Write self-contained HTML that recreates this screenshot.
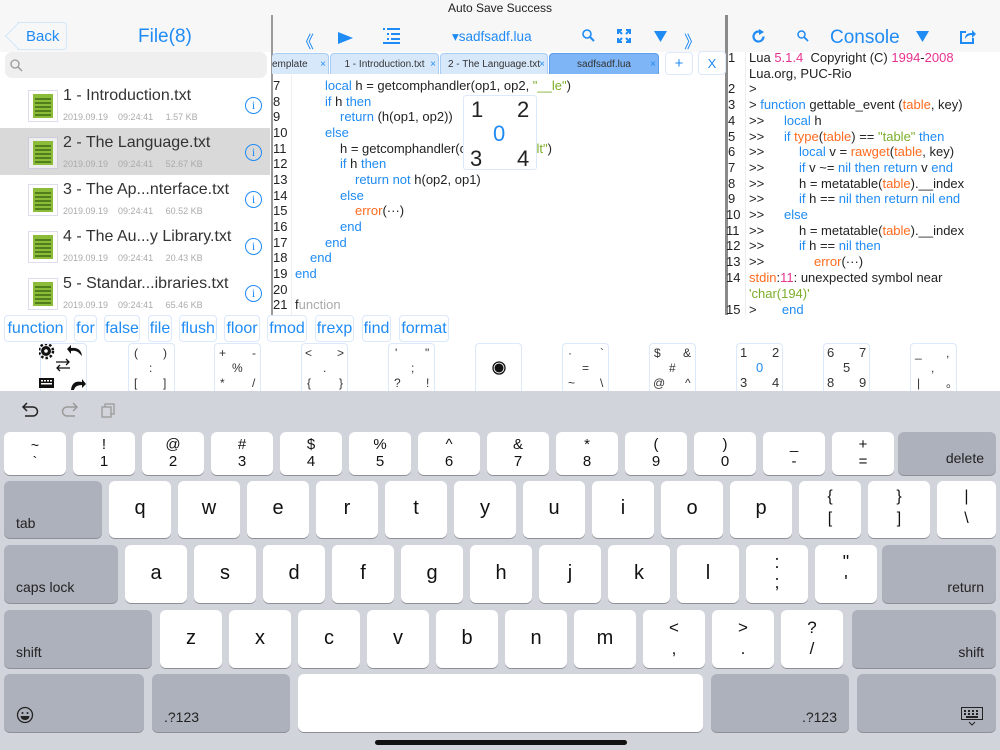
<!DOCTYPE html>
<html><head><meta charset="utf-8"><style>
*{margin:0;padding:0;box-sizing:border-box}
body{width:1000px;height:750px;overflow:hidden;background:#fff;font-family:"Liberation Sans",sans-serif;position:relative;color:#222}
.a{position:absolute}
.blue{color:#1f8bf5}
.k{color:#1f8bf5}.o{color:#ff6b1f}.m{color:#e8328f}.g{color:#7cae2a}.gr{color:#aaa}
.cl{position:absolute;font-size:13px;white-space:pre;line-height:16px;height:16px}
.fr{position:absolute;left:0;width:270px;height:47px}
.ft{position:absolute;left:63px;top:6px;font-size:16px;color:#333}
.fd{position:absolute;left:63px;top:31px;font-size:9px;color:#aaa;white-space:pre}
.fi{position:absolute;left:28px;top:9px}
.info{position:absolute;left:245px;top:16px;width:17px;height:17px;border:1.3px solid #1f8bf5;border-radius:50%;color:#1f8bf5;font-size:12px;text-align:center;line-height:15px;font-family:"Liberation Serif",serif}
.tab{position:absolute;top:53px;height:21px;background:#d7e8fb;border:1px solid #a9cdf5;border-bottom:none;border-radius:4px 4px 0 0;font-size:10px;color:#333;line-height:21px;text-align:center}
.tab i{position:absolute;right:2px;top:0;font-style:normal;color:#1f8bf5;font-size:10px}
.kw{position:absolute;top:315px;height:27px;border:1px solid #dbe9fb;border-radius:4px;color:#1f8bf5;font-size:16px;line-height:26px;text-align:center}
.sk{position:absolute;top:343px;width:47px;height:48px;border:1px solid #dbe9fb;border-bottom:none;border-radius:4px 4px 0 0;font-size:12px;color:#333}
.sk span{position:absolute;line-height:12px}
.key{position:absolute;background:#fff;border-radius:6px;box-shadow:0 1px 0 #8d9096;text-align:center;color:#111}
.dk{background:#adb1bb;color:#222;text-align:left}
.l1{font-size:20px}
</style></head><body>
<div class="a" style="left:0;top:0;width:1000px;height:52px;background:#f7f7f7"></div>
<div class="a" style="left:0;top:0;width:1000px;text-align:center;font-size:12px;top:1px;color:#222">Auto Save Success</div>
<div class="a" style="left:17px;top:22px;width:50px;height:28px;border:1px solid #d5e6fa;border-left:none;border-radius:0 4px 4px 0"></div>
<div class="a" style="left:9px;top:26px;width:20px;height:20px;border-left:1px solid #d5e6fa;border-bottom:1px solid #d5e6fa;transform:rotate(45deg)"></div>
<div class="a blue" style="left:26px;top:28px;font-size:15px">Back</div>
<div class="a blue" style="left:138px;top:26px;font-size:19px">File(8)</div>
<div class="a" style="left:5px;top:52px;width:262px;height:26px;background:#efeff0;border-radius:7px"></div>
<svg class="a" style="left:10px;top:59px" width="13" height="13"><circle cx="5" cy="5" r="4" fill="none" stroke="#999" stroke-width="1.3"/><line x1="8" y1="8" x2="12" y2="12" stroke="#999" stroke-width="1.4"/></svg>
<div class="fr" style="top:81px"><svg class="fi" width="30" height="32"><rect x="0.5" y="0.5" width="29" height="31" fill="#fff" stroke="#dde"/><rect x="5" y="4" width="20" height="24" fill="#8dbb3a"/><g stroke="#3d6b12" stroke-width="1.5"><line x1="7" y1="9" x2="23" y2="9"/><line x1="7" y1="13" x2="23" y2="13"/><line x1="7" y1="17" x2="23" y2="17"/><line x1="7" y1="21" x2="23" y2="21"/><line x1="7" y1="25" x2="23" y2="25"/></g></svg><div class="ft">1 - Introduction.txt</div><div class="fd">2019.09.19    09:24:41     1.57 KB</div><div class="info">i</div></div>
<div class="fr" style="top:128px;background:#d9d9d9"><svg class="fi" width="30" height="32"><rect x="0.5" y="0.5" width="29" height="31" fill="#eee" stroke="#ccd"/><rect x="5" y="4" width="20" height="24" fill="#8dbb3a"/><g stroke="#3d6b12" stroke-width="1.5"><line x1="7" y1="9" x2="23" y2="9"/><line x1="7" y1="13" x2="23" y2="13"/><line x1="7" y1="17" x2="23" y2="17"/><line x1="7" y1="21" x2="23" y2="21"/><line x1="7" y1="25" x2="23" y2="25"/></g></svg><div class="ft">2 - The Language.txt</div><div class="fd">2019.09.19    09:24:41     52.67 KB</div><div class="info">i</div></div>
<div class="fr" style="top:175px"><svg class="fi" width="30" height="32"><rect x="0.5" y="0.5" width="29" height="31" fill="#fff" stroke="#dde"/><rect x="5" y="4" width="20" height="24" fill="#8dbb3a"/><g stroke="#3d6b12" stroke-width="1.5"><line x1="7" y1="9" x2="23" y2="9"/><line x1="7" y1="13" x2="23" y2="13"/><line x1="7" y1="17" x2="23" y2="17"/><line x1="7" y1="21" x2="23" y2="21"/><line x1="7" y1="25" x2="23" y2="25"/></g></svg><div class="ft">3 - The Ap...nterface.txt</div><div class="fd">2019.09.19    09:24:41     60.52 KB</div><div class="info">i</div></div>
<div class="fr" style="top:222px"><svg class="fi" width="30" height="32"><rect x="0.5" y="0.5" width="29" height="31" fill="#fff" stroke="#dde"/><rect x="5" y="4" width="20" height="24" fill="#8dbb3a"/><g stroke="#3d6b12" stroke-width="1.5"><line x1="7" y1="9" x2="23" y2="9"/><line x1="7" y1="13" x2="23" y2="13"/><line x1="7" y1="17" x2="23" y2="17"/><line x1="7" y1="21" x2="23" y2="21"/><line x1="7" y1="25" x2="23" y2="25"/></g></svg><div class="ft">4 - The Au...y Library.txt</div><div class="fd">2019.09.19    09:24:41     20.43 KB</div><div class="info">i</div></div>
<div class="fr" style="top:269px"><svg class="fi" width="30" height="32"><rect x="0.5" y="0.5" width="29" height="31" fill="#fff" stroke="#dde"/><rect x="5" y="4" width="20" height="24" fill="#8dbb3a"/><g stroke="#3d6b12" stroke-width="1.5"><line x1="7" y1="9" x2="23" y2="9"/><line x1="7" y1="13" x2="23" y2="13"/><line x1="7" y1="17" x2="23" y2="17"/><line x1="7" y1="21" x2="23" y2="21"/><line x1="7" y1="25" x2="23" y2="25"/></g></svg><div class="ft">5 - Standar...ibraries.txt</div><div class="fd">2019.09.19    09:24:41     65.46 KB</div><div class="info">i</div></div>
<div class="a" style="left:271px;top:15px;width:2px;height:300px;background:#9a9a9a"></div>
<div class="a" style="left:725px;top:15px;width:3px;height:300px;background:#8a8a8a"></div>
<div class="a blue" style="left:297px;top:28px;font-size:17px">《</div>
<svg class="a" style="left:338px;top:32px" width="15" height="12"><path d="M0 0L15 6L0 12Z" fill="#1f8bf5"/></svg>
<svg class="a" style="left:383px;top:28px" width="17" height="16"><g fill="#1f8bf5"><rect x="0" y="0" width="2" height="2"/><rect x="4" y="0" width="13" height="2"/><rect x="4" y="5" width="2" height="2"/><rect x="8" y="5" width="9" height="2"/><rect x="4" y="10" width="2" height="2"/><rect x="8" y="10" width="9" height="2"/><rect x="0" y="14" width="17" height="2"/></g></svg>
<div class="a blue" style="left:452px;top:29px;font-size:13.5px">▾sadfsadf.lua</div>
<svg class="a" style="left:582px;top:29px" width="13" height="13"><circle cx="5" cy="5" r="4" fill="none" stroke="#1f8bf5" stroke-width="1.6"/><line x1="8" y1="8" x2="12" y2="12" stroke="#1f8bf5" stroke-width="2"/></svg>
<svg class="a" style="left:617px;top:29px" width="14" height="14"><g stroke="#1f8bf5" stroke-width="2" fill="none"><path d="M1 5V1H5M9 1H13V5M13 9V13H9M5 13H1V9"/><path d="M2 2L5 5M12 2L9 5M12 12L9 9M2 12L5 9"/></g></svg>
<svg class="a" style="left:654px;top:31px" width="13" height="11"><path d="M0 0H13L6.5 11Z" fill="#1f8bf5"/></svg>
<div class="a blue" style="left:684px;top:28px;font-size:17px">》</div>
<div class="tab" style="left:272px;width:57px;border-left:none;text-align:left;padding-left:0">emplate<i>×</i></div>
<div class="tab" style="left:330px;width:109px">1 - Introduction.txt<i>×</i></div>
<div class="tab" style="left:440px;width:108px">2 - The Language.txt<i>×</i></div>
<div class="tab" style="left:549px;width:110px;background:#7db5f6;border-color:#5c9eea">sadfsadf.lua<i>×</i></div>
<div class="a blue" style="left:665px;top:52px;width:28px;height:23px;border:1px solid #dbe9fb;border-radius:4px;text-align:center;font-size:15px;line-height:22px">+</div>
<div class="a blue" style="left:698px;top:51px;width:28px;height:24px;border:1px solid #dbe9fb;border-radius:4px;text-align:center;font-size:13px;line-height:23px">X</div>
<div class="a" style="left:291px;top:75px;width:1px;height:240px;background:#eee"></div>
<div class="cl" style="left:273px;top:78px">7</div><div class="cl" style="left:325px;top:78px"><span class="k">local</span> h = getcomphandler(op1, op2, <span class="g">"__le"</span>)</div>
<div class="cl" style="left:273px;top:94px">8</div><div class="cl" style="left:325px;top:94px"><span class="k">if</span> h <span class="k">then</span></div>
<div class="cl" style="left:273px;top:109px">9</div><div class="cl" style="left:340px;top:109px"><span class="k">return</span> (h(op1, op2))</div>
<div class="cl" style="left:273px;top:125px">10</div><div class="cl" style="left:325px;top:125px"><span class="k">else</span></div>
<div class="cl" style="left:273px;top:141px">11</div><div class="cl" style="left:340px;top:141px">h = getcomphandler(op1, op2, <span class="g">"__lt"</span>)</div>
<div class="cl" style="left:273px;top:156px">12</div><div class="cl" style="left:340px;top:156px"><span class="k">if</span> h <span class="k">then</span></div>
<div class="cl" style="left:273px;top:172px">13</div><div class="cl" style="left:355px;top:172px"><span class="k">return not</span> h(op2, op1)</div>
<div class="cl" style="left:273px;top:188px">14</div><div class="cl" style="left:340px;top:188px"><span class="k">else</span></div>
<div class="cl" style="left:273px;top:203px">15</div><div class="cl" style="left:355px;top:203px"><span class="o">error</span>(···)</div>
<div class="cl" style="left:273px;top:219px">16</div><div class="cl" style="left:340px;top:219px"><span class="k">end</span></div>
<div class="cl" style="left:273px;top:235px">17</div><div class="cl" style="left:325px;top:235px"><span class="k">end</span></div>
<div class="cl" style="left:273px;top:250px">18</div><div class="cl" style="left:310px;top:250px"><span class="k">end</span></div>
<div class="cl" style="left:273px;top:266px">19</div><div class="cl" style="left:295px;top:266px"><span class="k">end</span></div>
<div class="cl" style="left:273px;top:282px">20</div>
<div class="cl" style="left:273px;top:297px">21</div><div class="cl" style="left:295px;top:297px">f<span class="gr">unction</span></div>
<div class="a" style="left:463px;top:95px;width:74px;height:75px;background:#fff;border:1px solid #dbe9fb;border-radius:3px;font-size:22px">
<span class="a" style="left:7px;top:1px">1</span><span class="a" style="left:53px;top:1px">2</span><span class="a blue" style="left:29px;top:25px">0</span><span class="a" style="left:6px;top:50px">3</span><span class="a" style="left:53px;top:50px">4</span></div>
<svg class="a" style="left:751px;top:29px" width="15" height="15"><path d="M12.5 7.5A5 5 0 1 1 10 3.2" fill="none" stroke="#1f8bf5" stroke-width="2.2"/><path d="M8 0L13 3L8 6Z" fill="#1f8bf5"/></svg>
<svg class="a" style="left:797px;top:30px" width="12" height="12"><circle cx="4.5" cy="4.5" r="3.5" fill="none" stroke="#1f8bf5" stroke-width="1.5"/><line x1="7" y1="7" x2="11" y2="11" stroke="#1f8bf5" stroke-width="1.8"/></svg>
<div class="a blue" style="left:830px;top:27px;font-size:19px">Console</div>
<svg class="a" style="left:916px;top:31px" width="13" height="11"><path d="M0 0H13L6.5 11Z" fill="#1f8bf5"/></svg>
<svg class="a" style="left:959px;top:28px" width="17" height="16"><path d="M7 4H2V15H14V10" fill="none" stroke="#1f8bf5" stroke-width="2"/><path d="M6 11C6 6 9 5 13 5V2L17 6L13 10V7C10 7 8 8 6 11Z" fill="#1f8bf5"/></svg>
<div class="a" style="left:745px;top:52px;width:1px;height:263px;background:#eee"></div>
<div class="cl" style="left:728px;top:50px">1</div><div class="cl" style="left:749px;top:50px">Lua <span class="m">5.1.4</span>  Copyright (C) <span class="m">1994</span>-<span class="m">2008</span></div>
<div class="cl" style="left:749px;top:66px">Lua.org, PUC-Rio</div>
<div class="cl" style="left:728px;top:81px">2</div><div class="cl" style="left:749px;top:81px">&gt;</div>
<div class="cl" style="left:728px;top:97px">3</div><div class="cl" style="left:749px;top:97px">&gt; <span class="k">function</span> gettable_event (<span class="o">table</span>, key)</div>
<div class="cl" style="left:728px;top:113px">4</div><div class="cl" style="left:749px;top:113px">&gt;&gt;</div><div class="cl" style="left:784px;top:113px"><span class="k">local</span> h</div>
<div class="cl" style="left:728px;top:129px">5</div><div class="cl" style="left:749px;top:129px">&gt;&gt;</div><div class="cl" style="left:784px;top:129px"><span class="k">if</span> <span class="o">type</span>(<span class="o">table</span>) == <span class="g">"table"</span> <span class="k">then</span></div>
<div class="cl" style="left:728px;top:144px">6</div><div class="cl" style="left:749px;top:144px">&gt;&gt;</div><div class="cl" style="left:799px;top:144px"><span class="k">local</span> v = <span class="o">rawget</span>(<span class="o">table</span>, key)</div>
<div class="cl" style="left:728px;top:160px">7</div><div class="cl" style="left:749px;top:160px">&gt;&gt;</div><div class="cl" style="left:799px;top:160px"><span class="k">if</span> v ~= <span class="k">nil then return</span> v <span class="k">end</span></div>
<div class="cl" style="left:728px;top:176px">8</div><div class="cl" style="left:749px;top:176px">&gt;&gt;</div><div class="cl" style="left:799px;top:176px">h = metatable(<span class="o">table</span>).__index</div>
<div class="cl" style="left:728px;top:191px">9</div><div class="cl" style="left:749px;top:191px">&gt;&gt;</div><div class="cl" style="left:799px;top:191px"><span class="k">if</span> h == <span class="k">nil then return nil end</span></div>
<div class="cl" style="left:726px;top:207px">10</div><div class="cl" style="left:749px;top:207px">&gt;&gt;</div><div class="cl" style="left:784px;top:207px"><span class="k">else</span></div>
<div class="cl" style="left:726px;top:223px">11</div><div class="cl" style="left:749px;top:223px">&gt;&gt;</div><div class="cl" style="left:799px;top:223px">h = metatable(<span class="o">table</span>).__index</div>
<div class="cl" style="left:726px;top:238px">12</div><div class="cl" style="left:749px;top:238px">&gt;&gt;</div><div class="cl" style="left:799px;top:238px"><span class="k">if</span> h == <span class="k">nil then</span></div>
<div class="cl" style="left:726px;top:254px">13</div><div class="cl" style="left:749px;top:254px">&gt;&gt;</div><div class="cl" style="left:814px;top:254px"><span class="o">error</span>(···)</div>
<div class="cl" style="left:726px;top:270px">14</div><div class="cl" style="left:749px;top:270px"><span class="o">stdin</span>:<span class="m">11</span>: unexpected symbol near</div>
<div class="cl" style="left:749px;top:286px"><span class="g">'char(194)'</span></div>
<div class="cl" style="left:726px;top:302px;height:13px;overflow:hidden">15</div><div class="cl" style="left:749px;top:302px;height:13px;overflow:hidden">&gt;       <span class="k">end</span></div>
<div class="kw" style="left:4px;width:63px">function</div>
<div class="kw" style="left:74px;width:23px">for</div>
<div class="kw" style="left:104px;width:36px">false</div>
<div class="kw" style="left:148px;width:24px">file</div>
<div class="kw" style="left:179px;width:38px">flush</div>
<div class="kw" style="left:224px;width:36px">floor</div>
<div class="kw" style="left:267px;width:40px">fmod</div>
<div class="kw" style="left:315px;width:39px">frexp</div>
<div class="kw" style="left:362px;width:29px">find</div>
<div class="kw" style="left:399px;width:50px">format</div>
<div class="sk" style="left:40px"><svg class="a" style="left:-2px;top:0" width="48" height="47"><circle cx="7" cy="7" r="5" fill="#111"/><circle cx="7" cy="7" r="7" fill="none" stroke="#111" stroke-width="2.5" stroke-dasharray="2.5 2"/><circle cx="7" cy="7" r="1.8" fill="#fff"/><path d="M32 4Q42 3 43 12L40 9Q37 6 32 7L32 10L28 5L32 1Z" fill="#111"/><path d="M17 18H30M27 15L30 18L27 21M31 24H18M21 21L18 24L21 27" stroke="#111" stroke-width="1.3" fill="none"/><rect x="0" y="34" width="15" height="10" fill="#111"/><g fill="#fff"><rect x="2" y="36" width="2" height="1.5"/><rect x="5" y="36" width="2" height="1.5"/><rect x="8" y="36" width="2" height="1.5"/><rect x="11" y="36" width="2" height="1.5"/><rect x="2" y="39" width="11" height="1.5"/></g><path d="M32 46Q33 36 43 38L43 35L47 40L43 44L43 41Q36 41 35 46Z" fill="#111"/></svg></div>
<div class="sk" style="left:128px"><span style="left:5px;top:3px">(</span><span style="left:34px;top:3px">)</span><span style="left:20px;top:18px">:</span><span style="left:5px;top:33px">[</span><span style="left:34px;top:33px">]</span></div>
<div class="sk" style="left:214px"><span style="left:4px;top:3px">+</span><span style="left:37px;top:3px">-</span><span style="left:17px;top:18px">%</span><span style="left:5px;top:33px">*</span><span style="left:37px;top:33px">/</span></div>
<div class="sk" style="left:301px"><span style="left:3px;top:3px">&lt;</span><span style="left:35px;top:3px">&gt;</span><span style="left:21px;top:18px">.</span><span style="left:5px;top:33px">{</span><span style="left:37px;top:33px">}</span></div>
<div class="sk" style="left:388px"><span style="left:6px;top:3px">'</span><span style="left:36px;top:3px">"</span><span style="left:22px;top:18px">;</span><span style="left:5px;top:33px">?</span><span style="left:37px;top:33px">!</span></div>
<div class="sk" style="left:475px"><svg class="a" style="left:16px;top:17px" width="14" height="14"><circle cx="7" cy="7" r="6" fill="none" stroke="#111" stroke-width="1.3"/><circle cx="7" cy="7" r="4.5" fill="#111"/></svg></div>
<div class="sk" style="left:562px"><span style="left:5px;top:3px">·</span><span style="left:37px;top:3px">`</span><span style="left:19px;top:18px">=</span><span style="left:5px;top:33px">~</span><span style="left:37px;top:33px">\</span></div>
<div class="sk" style="left:649px"><span style="left:4px;top:3px">$</span><span style="left:33px;top:3px">&amp;</span><span style="left:19px;top:18px">#</span><span style="left:3px;top:33px">@</span><span style="left:35px;top:33px">^</span></div>
<div class="sk" style="left:736px;font-size:13px"><span style="left:3px;top:3px">1</span><span style="left:35px;top:3px">2</span><span class="blue" style="left:19px;top:18px">0</span><span style="left:3px;top:33px">3</span><span style="left:35px;top:33px">4</span></div>
<div class="sk" style="left:823px;font-size:13px"><span style="left:3px;top:3px">6</span><span style="left:35px;top:3px">7</span><span style="left:19px;top:18px">5</span><span style="left:3px;top:33px">8</span><span style="left:35px;top:33px">9</span></div>
<div class="sk" style="left:910px"><span style="left:4px;top:3px">_</span><span style="left:35px;top:3px">,</span><span style="left:20px;top:18px">,</span><span style="left:6px;top:33px">|</span><span style="left:35px;top:33px">。</span></div>
<div class="a" style="left:0;top:391px;width:1000px;height:359px;background:#d1d4da"></div>
<svg class="a" style="left:20px;top:402px" width="100" height="16"><path d="M4 5H13A4.5 4.5 0 0 1 13 14H5" fill="none" stroke="#222" stroke-width="1.5"/><path d="M7 1L3 5L7 9" fill="none" stroke="#222" stroke-width="1.5"/><path d="M56 5H47A4.5 4.5 0 0 0 47 14H55" fill="none" stroke="#999" stroke-width="1.5"/><path d="M53 1L57 5L53 9" fill="none" stroke="#999" stroke-width="1.5"/><rect x="82" y="5" width="9" height="10" fill="none" stroke="#999" stroke-width="1.3"/><path d="M85 5V2H94V12H91" fill="none" stroke="#999" stroke-width="1.3"/></svg>
<div class="key" style="left:4px;top:432px;width:62px;height:43px;font-size:14px;line-height:16px;padding-top:5px">~<br>`</div>
<div class="key" style="left:73px;top:432px;width:62px;height:43px;font-size:15px;line-height:17px;padding-top:4px">!<br>1</div>
<div class="key" style="left:142px;top:432px;width:62px;height:43px;font-size:15px;line-height:17px;padding-top:4px">@<br>2</div>
<div class="key" style="left:211px;top:432px;width:62px;height:43px;font-size:15px;line-height:17px;padding-top:4px">#<br>3</div>
<div class="key" style="left:280px;top:432px;width:62px;height:43px;font-size:15px;line-height:17px;padding-top:4px">$<br>4</div>
<div class="key" style="left:349px;top:432px;width:62px;height:43px;font-size:15px;line-height:17px;padding-top:4px">%<br>5</div>
<div class="key" style="left:418px;top:432px;width:62px;height:43px;font-size:15px;line-height:17px;padding-top:4px">^<br>6</div>
<div class="key" style="left:487px;top:432px;width:62px;height:43px;font-size:15px;line-height:17px;padding-top:4px">&amp;<br>7</div>
<div class="key" style="left:556px;top:432px;width:62px;height:43px;font-size:15px;line-height:17px;padding-top:4px">*<br>8</div>
<div class="key" style="left:625px;top:432px;width:62px;height:43px;font-size:15px;line-height:17px;padding-top:4px">(<br>9</div>
<div class="key" style="left:694px;top:432px;width:62px;height:43px;font-size:15px;line-height:17px;padding-top:4px">)<br>0</div>
<div class="key" style="left:763px;top:432px;width:62px;height:43px;font-size:15px;line-height:17px;padding-top:4px">_<br>-</div>
<div class="key" style="left:832px;top:432px;width:62px;height:43px;font-size:15px;line-height:17px;padding-top:4px">+<br>=</div>
<div class="key dk" style="left:898px;top:432px;width:98px;height:43px;font-size:14px;text-align:right;padding:18px 12px 0 0">delete</div>
<div class="key dk" style="left:4px;top:481px;width:98px;height:57px;font-size:14px;padding:34px 0 0 12px">tab</div>
<div class="key l1" style="left:109px;top:481px;width:62px;height:57px;line-height:54px">q</div>
<div class="key l1" style="left:178px;top:481px;width:62px;height:57px;line-height:54px">w</div>
<div class="key l1" style="left:247px;top:481px;width:62px;height:57px;line-height:54px">e</div>
<div class="key l1" style="left:316px;top:481px;width:62px;height:57px;line-height:54px">r</div>
<div class="key l1" style="left:385px;top:481px;width:62px;height:57px;line-height:54px">t</div>
<div class="key l1" style="left:454px;top:481px;width:62px;height:57px;line-height:54px">y</div>
<div class="key l1" style="left:523px;top:481px;width:62px;height:57px;line-height:54px">u</div>
<div class="key l1" style="left:592px;top:481px;width:62px;height:57px;line-height:54px">i</div>
<div class="key l1" style="left:661px;top:481px;width:62px;height:57px;line-height:54px">o</div>
<div class="key l1" style="left:730px;top:481px;width:62px;height:57px;line-height:54px">p</div>
<div class="key" style="left:799px;top:481px;width:62px;height:57px;font-size:16px;line-height:22px;padding-top:5px">{<br>[</div>
<div class="key" style="left:868px;top:481px;width:62px;height:57px;font-size:16px;line-height:22px;padding-top:5px">}<br>]</div>
<div class="key" style="left:937px;top:481px;width:59px;height:57px;font-size:16px;line-height:22px;padding-top:5px">|<br>\</div>
<div class="key dk" style="left:4px;top:545px;width:114px;height:58px;font-size:14px;padding:34px 0 0 12px">caps lock</div>
<div class="key l1" style="left:125px;top:545px;width:62px;height:58px;line-height:56px">a</div>
<div class="key l1" style="left:194px;top:545px;width:62px;height:58px;line-height:56px">s</div>
<div class="key l1" style="left:263px;top:545px;width:62px;height:58px;line-height:56px">d</div>
<div class="key l1" style="left:332px;top:545px;width:62px;height:58px;line-height:56px">f</div>
<div class="key l1" style="left:401px;top:545px;width:62px;height:58px;line-height:56px">g</div>
<div class="key l1" style="left:470px;top:545px;width:62px;height:58px;line-height:56px">h</div>
<div class="key l1" style="left:539px;top:545px;width:62px;height:58px;line-height:56px">j</div>
<div class="key l1" style="left:608px;top:545px;width:62px;height:58px;line-height:56px">k</div>
<div class="key l1" style="left:677px;top:545px;width:62px;height:58px;line-height:56px">l</div>
<div class="key" style="left:746px;top:545px;width:62px;height:58px;font-size:18px;line-height:20px;padding-top:7px">:<br>;</div>
<div class="key" style="left:815px;top:545px;width:62px;height:58px;font-size:18px;line-height:20px;padding-top:7px">"<br>'</div>
<div class="key dk" style="left:882px;top:545px;width:114px;height:58px;font-size:14px;text-align:right;padding:34px 12px 0 0">return</div>
<div class="key dk" style="left:4px;top:610px;width:148px;height:58px;font-size:14px;padding:34px 0 0 12px">shift</div>
<div class="key l1" style="left:160px;top:610px;width:62px;height:58px;line-height:56px">z</div>
<div class="key l1" style="left:229px;top:610px;width:62px;height:58px;line-height:56px">x</div>
<div class="key l1" style="left:298px;top:610px;width:62px;height:58px;line-height:56px">c</div>
<div class="key l1" style="left:367px;top:610px;width:62px;height:58px;line-height:56px">v</div>
<div class="key l1" style="left:436px;top:610px;width:62px;height:58px;line-height:56px">b</div>
<div class="key l1" style="left:505px;top:610px;width:62px;height:58px;line-height:56px">n</div>
<div class="key l1" style="left:574px;top:610px;width:62px;height:58px;line-height:56px">m</div>
<div class="key" style="left:643px;top:610px;width:62px;height:58px;font-size:17px;line-height:21px;padding-top:7px">&lt;<br>,</div>
<div class="key" style="left:712px;top:610px;width:62px;height:58px;font-size:17px;line-height:21px;padding-top:7px">&gt;<br>.</div>
<div class="key" style="left:781px;top:610px;width:62px;height:58px;font-size:17px;line-height:21px;padding-top:7px">?<br>/</div>
<div class="key dk" style="left:852px;top:610px;width:144px;height:58px;font-size:14px;text-align:right;padding:34px 12px 0 0">shift</div>
<div class="key dk" style="left:4px;top:674px;width:140px;height:58px"><svg class="a" style="left:12px;top:32px" width="18" height="18"><circle cx="9" cy="9" r="7.5" fill="none" stroke="#222" stroke-width="1.3"/><circle cx="6.5" cy="7" r="1" fill="#222"/><circle cx="11.5" cy="7" r="1" fill="#222"/><path d="M4.5 10H13.5Q13 14 9 14Q5 14 4.5 10Z" fill="#222"/></svg></div>
<div class="key dk" style="left:152px;top:674px;width:138px;height:58px;font-size:14px;padding:35px 0 0 12px">.?123</div>
<div class="key" style="left:298px;top:674px;width:405px;height:58px"></div>
<div class="key dk" style="left:711px;top:674px;width:138px;height:58px;font-size:14px;text-align:right;padding:35px 12px 0 0">.?123</div>
<div class="key dk" style="left:857px;top:674px;width:139px;height:58px"><svg class="a" style="left:104px;top:33px" width="22" height="19"><rect x="0.5" y="0.5" width="21" height="12" fill="none" stroke="#222"/><g fill="#222"><rect x="3" y="3" width="2" height="2"/><rect x="7" y="3" width="2" height="2"/><rect x="11" y="3" width="2" height="2"/><rect x="15" y="3" width="2" height="2"/><rect x="3" y="6" width="2" height="2"/><rect x="7" y="6" width="2" height="2"/><rect x="11" y="6" width="2" height="2"/><rect x="15" y="6" width="2" height="2"/><rect x="5" y="9" width="12" height="2"/></g><path d="M8 15L11 18L14 15" fill="none" stroke="#222"/></svg></div>
<div class="a" style="left:375px;top:740px;width:252px;height:5px;background:#111;border-radius:3px"></div>
</body></html>
